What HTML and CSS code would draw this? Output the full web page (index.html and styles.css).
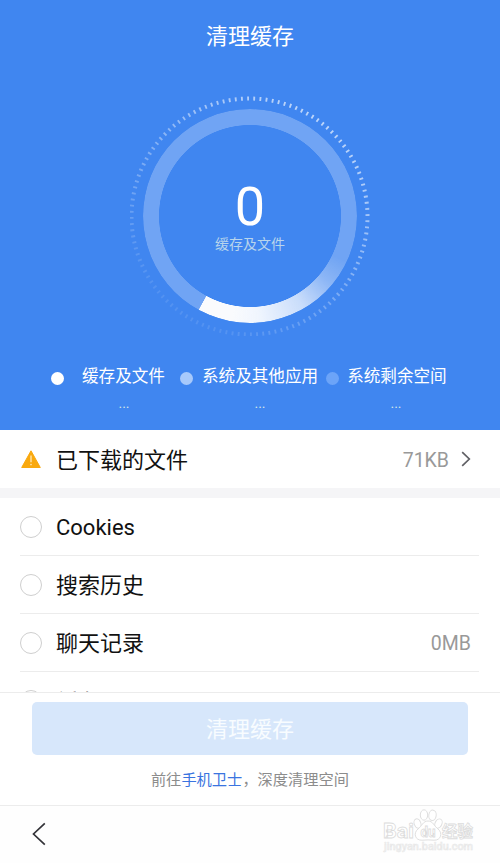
FILE: index.html
```
<!DOCTYPE html>
<html lang="zh-CN">
<head>
  <meta charset="UTF-8" />
  <meta name="viewport" content="width=device-width, initial-scale=1.0"/>
  <title>清理缓存</title>
  <link rel="stylesheet" href="styles.css">
</head>
<body>

  <header class="summary">
    <h1 class="title">清理缓存</h1>

    <div class="gauge">
      <svg class="gauge-ticks" viewBox="0 0 240 240">
        <defs>
          <linearGradient id="tickFade" x1="0.8" y1="0.1" x2="0.25" y2="0.9">
            <stop offset="0" stop-color="#fff" stop-opacity="0.65"/>
            <stop offset="0.5" stop-color="#fff" stop-opacity="0.35"/>
            <stop offset="1" stop-color="#fff" stop-opacity="0.1"/>
          </linearGradient>
        </defs>
        <circle cx="119.5" cy="120.5" r="118" fill="none" stroke="url(#tickFade)" stroke-width="4" pathLength="720" stroke-dasharray="1.8 4.2" stroke-dashoffset="2.3"/>
      </svg>
      <div class="gauge-ring"></div>
      <div class="gauge-value">
        <span class="gauge-number">0</span>
        <span class="gauge-label">缓存及文件</span>
      </div>
    </div>

    <ul class="legend">
      <li class="legend-item"><span class="dot dot-cache"></span><span class="legend-name">缓存及文件</span></li>
      <li class="legend-item"><span class="dot dot-system"></span><span class="legend-name">系统及其他应用</span></li>
      <li class="legend-item"><span class="dot dot-free"></span><span class="legend-name">系统剩余空间</span></li>
    </ul>
    <div class="legend-values">
      <span>...</span>
      <span>...</span>
      <span>...</span>
    </div>
  </header>

  <main class="content">
    <div class="downloads">
      <svg class="warning" viewBox="0 0 20 18">
        <path d="M10 0.8 L19.3 17.5 H0.7 Z" fill="#f9a90f" stroke="#f9a90f" stroke-linejoin="round"/>
        <path d="M10 5.5 V12.3" stroke="#ffe9b8" stroke-width="1.3"/>
        <circle cx="10" cy="14.6" r="0.8" fill="#ffe9b8"/>
      </svg>
      <span class="name">已下载的文件</span>
      <span class="size">71KB</span>
      <svg class="chevron" viewBox="0 0 10 16">
        <path d="M1.2 1.2 L8.3 8 L1.2 14.8" fill="none" stroke="#606065" stroke-width="1.7"/>
      </svg>
    </div>

    <ul class="list">
      <li class="row"><span class="radio"></span><span class="name">Cookies</span></li>
      <li class="row"><span class="radio"></span><span class="name">搜索历史</span></li>
      <li class="row"><span class="radio"></span><span class="name">聊天记录</span><span class="size">0MB</span></li>
      <li class="row"><span class="radio"></span><span class="name">缓存</span></li>
    </ul>
  </main>

  <section class="actions">
    <button class="clean-button" disabled>清理缓存</button>
    <p class="tip">前往<a class="tip-link">手机卫士</a>，深度清理空间</p>
  </section>

  <footer class="navbar">
    <svg class="back" viewBox="0 0 14 24">
      <path d="M12.8 1.3 L1.5 12 L12.8 22.7" fill="none" stroke="#333338" stroke-width="1.7"/>
    </svg>
    <div class="watermark">
      <svg class="watermark-logo" viewBox="0 0 96 50">
        <g fill="#fff" stroke="#dfdfdf" stroke-width="1">
          <ellipse cx="35.5" cy="17.5" rx="3.3" ry="4.8" transform="rotate(-20 35.5 17.5)"/>
          <ellipse cx="42" cy="9" rx="3.7" ry="5.2"/>
          <ellipse cx="50.5" cy="9.3" rx="3.7" ry="5.2" transform="rotate(8 50.5 9.3)"/>
          <ellipse cx="56.5" cy="17.5" rx="3.4" ry="4.8" transform="rotate(25 56.5 17.5)"/>
          <path d="M46 15 C41 15 40 20 36 23 C31 27 33 34.5 40 34.2 C44 33.8 48 33.8 52 34.2 C59 34.5 61 27 56 23 C52 20 51 15 46 15 Z"/>
        </g>
        <g class="watermark-text">
          <text class="wm-brand" x="1" y="32" textLength="31" lengthAdjust="spacingAndGlyphs">Bai</text>
          <text class="wm-du" x="38.5" y="31" textLength="15" lengthAdjust="spacingAndGlyphs">du</text>
          <text class="wm-cn" x="60" y="31">经验</text>
          <text class="wm-url" x="2" y="43.5" textLength="89" lengthAdjust="spacingAndGlyphs">jingyan.baidu.com</text>
        </g>
      </svg>
    </div>
  </footer>

</body>
</html>
```
FILE: styles.css
```
* {
  box-sizing: border-box;
}

body {
  margin: 0;
  height: 863px;
  display: flex;
  flex-direction: column;
  overflow: hidden;
  background-color: #fff;
  color: #111;
  font-family: Roboto, "Noto Sans CJK SC", sans-serif;
}

ul {
  list-style: none;
  margin: 0;
  padding: 0;
}

/* Blue summary area */
.summary {
  height: 430px;
  flex-shrink: 0;
  background-color: #4086f0;
  color: #fff;
}

.title {
  margin: 0;
  padding-top: 21px;
  line-height: 32px;
  font-size: 22px;
  font-weight: 400;
  text-align: center;
}

.gauge {
  display: grid;
  place-items: center;
  width: 240px;
  height: 240px;
  margin: 43px auto 0;
}

.gauge > * {
  grid-area: 1 / 1;
}

.gauge-ticks {
  width: 240px;
  height: 240px;
}

.gauge-ring {
  width: 214px;
  height: 214px;
  border-radius: 50%;
  background: conic-gradient(rgba(255, 255, 255, 0.25) 115deg, rgba(255, 255, 255, 0.4) 130deg, rgba(255, 255, 255, 0.72) 150deg, rgba(255, 255, 255, 0.92) 175deg, #fafbfd 190deg, #fafbfd 208.5deg, rgba(255, 255, 255, 0.25) 208.8deg);
  mask: radial-gradient(circle, transparent 90.7px, #000 91.3px);
}

.gauge-value {
  display: flex;
  flex-direction: column;
  align-items: center;
  padding-top: 2px;
}

.gauge-number {
  font-size: 54px;
  line-height: 54px;
}

.gauge-label {
  font-size: 14px;
  line-height: 20px;
  color: #b8d5ec;
}

.legend {
  display: flex;
  margin-top: 28px;
  padding-left: 51px;
  font-size: 16.6px;
  line-height: 24px;
}

.legend-item {
  display: flex;
  align-items: center;
  white-space: nowrap;
}

.legend-item + .legend-item {
  margin-left: 15px;
}

.legend-item:last-child {
  margin-left: 8px;
}

.legend-name {
  margin-left: 9px;
  padding-top: 1px;
}

.legend-item:first-child .legend-name {
  margin-left: 18px;
}

.legend-item:last-child .legend-name {
  margin-left: 8px;
}

.dot {
  width: 13px;
  height: 13px;
  margin-top: 4px;
  border-radius: 50%;
}

.dot-cache {
  background-color: #fff;
}

.dot-system {
  background-color: #a7c9fb;
}

.dot-free {
  background-color: #6ca4f8;
}

.legend-values {
  display: flex;
  padding: 4px 0 0 56px;
  font-size: 14px;
  line-height: 20px;
  color: #d3e4e8;
}

.legend-values span {
  width: 136px;
  text-align: center;
}

/* List */
.content {
  height: 262px;
  flex-shrink: 0;
  overflow: hidden;
}

.downloads {
  display: flex;
  align-items: center;
  height: 68px;
  padding: 0 29px 0 21px;
  border-bottom: 10px solid #f5f5f7;
}

.warning {
  width: 20px;
  height: 18px;
  margin-right: 15px;
}

.name {
  padding-top: 3px;
  font-size: 22px;
  line-height: 32px;
}

.size {
  margin-left: auto;
  padding-top: 2px;
  font-size: 19.5px;
  color: #999;
}

.chevron {
  width: 10px;
  height: 16px;
  margin-left: 12px;
}

.row {
  display: flex;
  align-items: center;
  height: 58px;
  margin: 0 21px 0 20px;
  padding-right: 8px;
  border-bottom: 1px solid #ececec;
}

.row:last-child {
  padding-top: 1px;
}

.radio {
  width: 22px;
  height: 22px;
  margin-right: 14px;
  border: 1px solid #cfcfcf;
  border-radius: 50%;
}

/* Bottom actions */
.actions {
  height: 113px;
  flex-shrink: 0;
  padding: 9px 32px 0;
  border-top: 1px solid #ececec;
  text-align: center;
}

.clean-button {
  display: block;
  width: 100%;
  height: 53px;
  padding: 0 0 3px;
  border: none;
  border-radius: 5px;
  background-color: #d7e7fb;
  color: #f8fcff;
  font-family: inherit;
  font-size: 22px;
}

.tip {
  margin: 14px 0 0;
  font-size: 15.25px;
  line-height: 22px;
  color: #8c8c8c;
}

.tip-link {
  color: #3a74e0;
}

.navbar {
  display: flex;
  flex: 1;
  align-items: flex-start;
  justify-content: space-between;
  padding: 0 22px 0 32px;
  border-top: 1px solid #ececec;
  background-color: #fefefe;
}

.back {
  width: 14px;
  height: 24px;
  margin-top: 16px;
}

.watermark-logo {
  display: block;
  width: 96px;
  height: 50px;
}

.watermark-text {
  fill: #fff;
  stroke: #dcdcdc;
  stroke-width: 0.8px;
  font-family: Roboto, "Noto Sans CJK SC", sans-serif;
  font-weight: 700;
}

.wm-brand {
  font-size: 21px;
}

.wm-du {
  font-size: 14px;
}

.wm-cn {
  font-size: 15.5px;
}

.wm-url {
  fill: #f2f2f2;
  stroke: #e6e6e6;
  stroke-width: 0.4px;
  font-size: 10px;
  font-weight: 500;
}
```
